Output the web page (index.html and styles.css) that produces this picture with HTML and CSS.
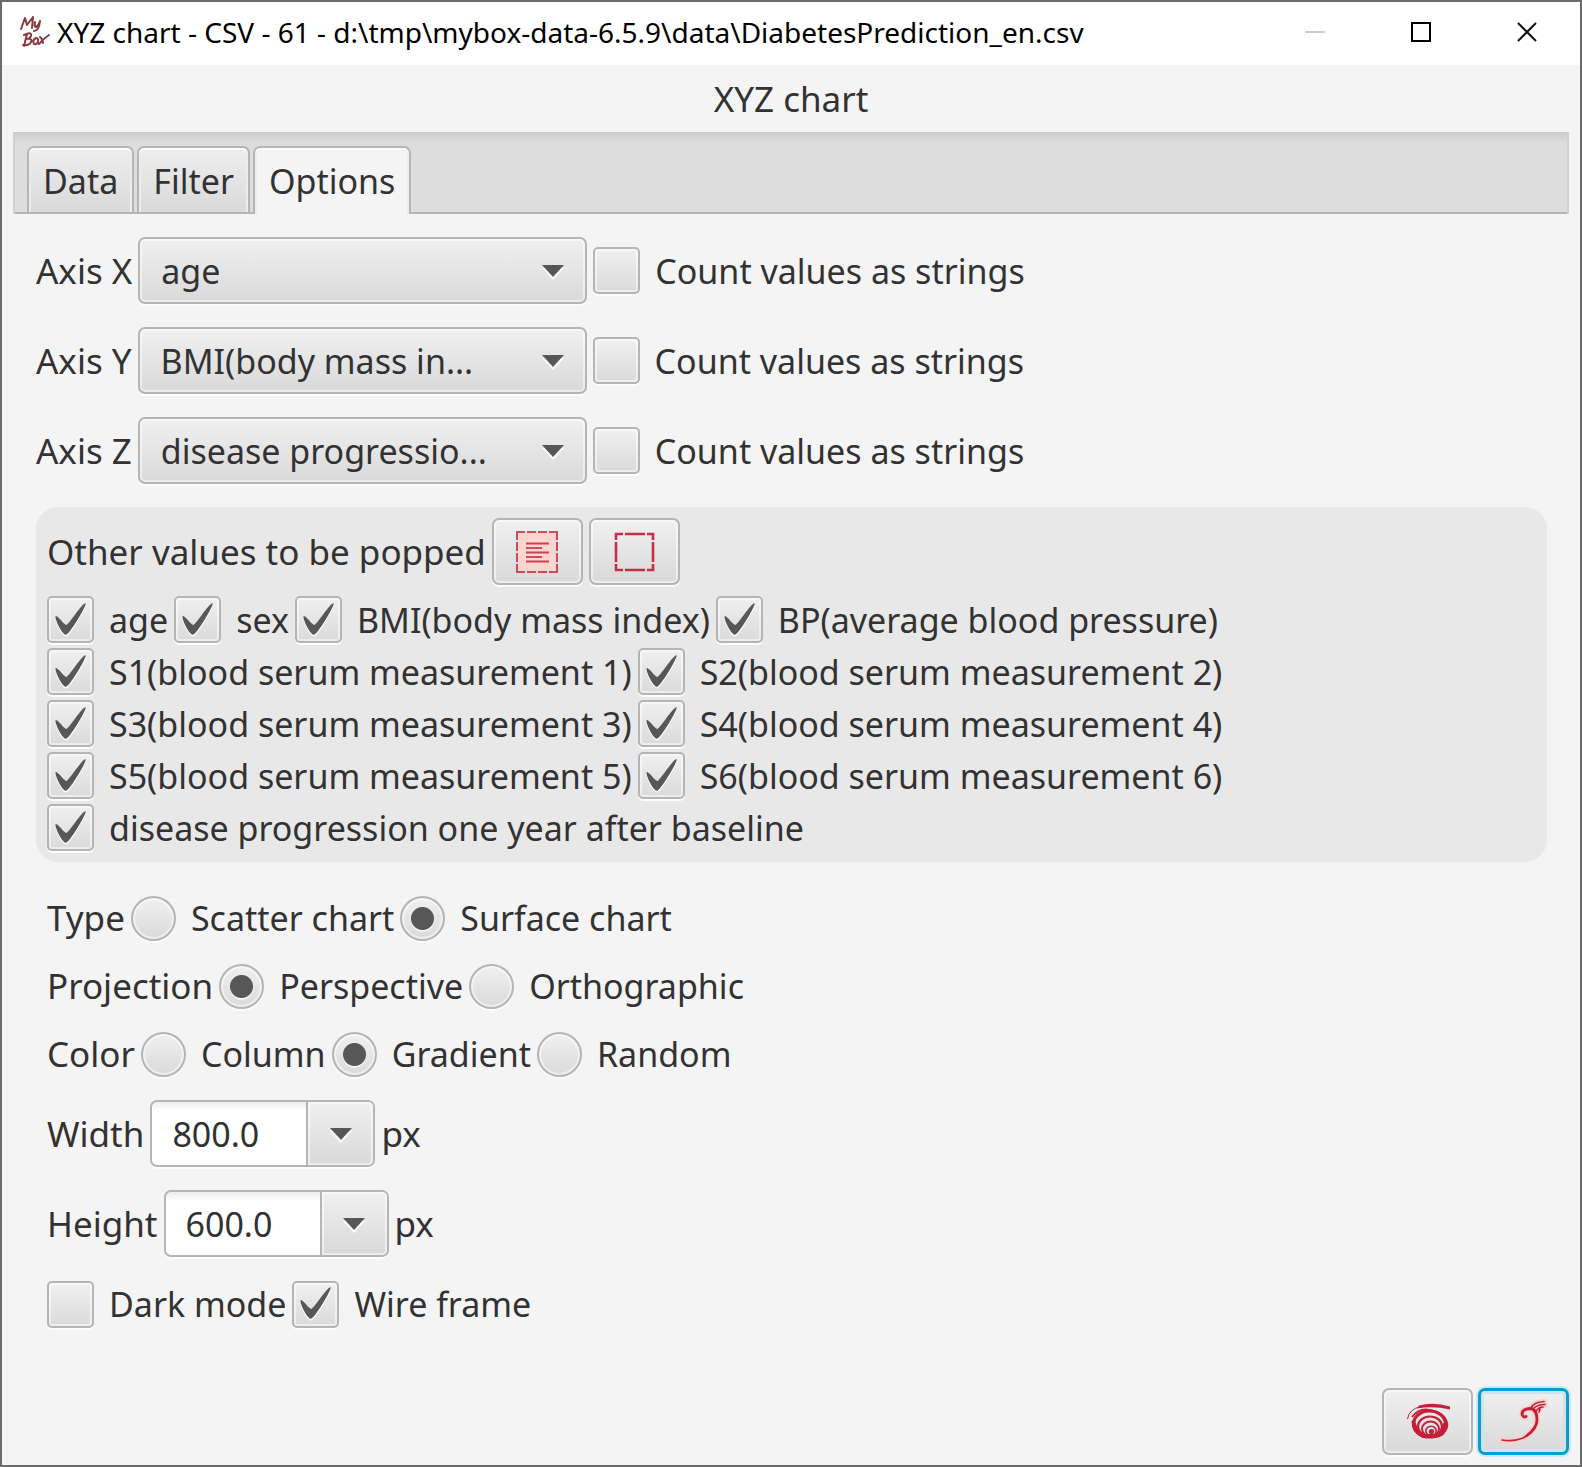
FILE: index.html
```html
<!DOCTYPE html>
<html lang="en">
<head>
<meta charset="utf-8">
<title>XYZ chart</title>
<link rel="stylesheet" href="styles.css">
</head>
<body>
<div class="window">
  <header class="titlebar">
    <svg class="logo" viewBox="0 0 30 32" aria-hidden="true"><g fill="none" stroke="#8a3a3c" stroke-width="2" stroke-linecap="round" stroke-linejoin="round"><path d="M1 13L5 2L7 9L13 1L12 12M15 6Q14 11 16 11Q18 10 20 5M20 5Q19 15 14 15"/><path d="M7 18L4 30M4 19Q12 15 11 20Q10 23 6 23Q13 22 11 26Q9 30 3 29M16 22Q12 24 14 28Q18 29 18 24Q18 22 16 22M20 21Q22 22 23 27M29 19Q24 22 19 28"/></g></svg>
    <span class="caption">XYZ chart - CSV - 61 - d:\tmp\mybox-data-6.5.9\data\DiabetesPrediction_en.csv</span>
    <div class="window-controls">
      <button type="button" aria-label="Minimize" disabled><svg viewBox="0 0 20 20"><path d="M0 10H20" stroke="#ccc" stroke-width="2"/></svg></button>
      <button type="button" aria-label="Maximize"><svg viewBox="0 0 20 20"><path d="M1 1H19V19H1Z" fill="none" stroke="#000" stroke-width="2"/></svg></button>
      <button type="button" aria-label="Close"><svg viewBox="0 0 20 20"><path d="M1 1L19 19M19 1L1 19" stroke="#111" stroke-width="2"/></svg></button>
    </div>
  </header>

  <main class="content">
    <h1 class="heading">XYZ chart</h1>
    <div class="tabs" role="tablist">
      <button type="button" class="tab" role="tab">Data</button>
      <button type="button" class="tab" role="tab">Filter</button>
      <button type="button" class="tab selected" role="tab" aria-selected="true">Options</button>
    </div>

    <form class="options">
      <div class="axes">
        <div class="row">
          <label for="axis-x">Axis X</label>
          <select id="axis-x" class="combo"><option>age</option></select>
          <label class="choice"><input type="checkbox">Count values as strings</label>
        </div>
        <div class="row">
          <label for="axis-y">Axis Y</label>
          <select id="axis-y" class="combo"><option>BMI(body mass in...</option></select>
          <label class="choice"><input type="checkbox">Count values as strings</label>
        </div>
        <div class="row">
          <label for="axis-z">Axis Z</label>
          <select id="axis-z" class="combo"><option>disease progressio...</option></select>
          <label class="choice"><input type="checkbox">Count values as strings</label>
        </div>
      </div>

      <section class="panel">
        <div class="row">
          <span>Other values to be popped</span>
          <button type="button" class="push" aria-label="Select all"><svg viewBox="0 0 42 42"><path d="M1 1H41V41H1Z" fill="#fbd5d0"/><path d="M1 9V1H9M11 1H20M22 1H31M33 1H41V9M41 11V20M41 22V31M41 33V41H33M31 41H22M20 41H11M9 41H1V33M1 31V22M1 20V11" fill="none" stroke="#d04a5c" stroke-width="2"/><path d="M10 12.500H33M10 21.500H33M10 30.500H33" stroke="#cf4055" stroke-width="2"/><path d="M10 17H26M10 26H26" stroke="#c41f38" stroke-width="1.300"/></svg></button>
          <button type="button" class="push" aria-label="Select none"><svg viewBox="0 0 42 42"><path d="M3 9V3H10M12 3H32M34 3H40V9M40 11V31M40 33V39H34M32 39H12M10 39H3V33M3 31V11" fill="none" stroke="#c72f45" stroke-width="2.600"/></svg></button>
        </div>
        <div class="values">
          <div class="row">
            <label class="choice"><input type="checkbox" checked>age</label>
            <label class="choice"><input type="checkbox" checked>sex</label>
            <label class="choice"><input type="checkbox" checked>BMI(body mass index)</label>
            <label class="choice"><input type="checkbox" checked>BP(average blood pressure)</label>
          </div>
          <div class="row">
            <label class="choice"><input type="checkbox" checked>S1(blood serum measurement 1)</label>
            <label class="choice"><input type="checkbox" checked>S2(blood serum measurement 2)</label>
          </div>
          <div class="row">
            <label class="choice"><input type="checkbox" checked>S3(blood serum measurement 3)</label>
            <label class="choice"><input type="checkbox" checked>S4(blood serum measurement 4)</label>
          </div>
          <div class="row">
            <label class="choice"><input type="checkbox" checked>S5(blood serum measurement 5)</label>
            <label class="choice"><input type="checkbox" checked>S6(blood serum measurement 6)</label>
          </div>
          <div class="row">
            <label class="choice"><input type="checkbox" checked>disease progression one year after baseline</label>
          </div>
        </div>
      </section>

      <div class="settings">
        <div class="row">
          <span>Type</span>
          <label class="choice"><input type="radio" name="type">Scatter chart</label>
          <label class="choice"><input type="radio" name="type" checked>Surface chart</label>
        </div>
        <div class="row">
          <span>Projection</span>
          <label class="choice"><input type="radio" name="projection" checked>Perspective</label>
          <label class="choice"><input type="radio" name="projection">Orthographic</label>
        </div>
        <div class="row">
          <span>Color</span>
          <label class="choice"><input type="radio" name="color">Column</label>
          <label class="choice"><input type="radio" name="color" checked>Gradient</label>
          <label class="choice"><input type="radio" name="color">Random</label>
        </div>
      </div>

      <div class="sizes">
        <div class="row">
          <label for="width">Width</label>
          <div class="editable"><input id="width" type="text" value="800.0"><button type="button" aria-label="Width choices"></button></div>
          <span>px</span>
        </div>
        <div class="row">
          <label for="height">Height</label>
          <div class="editable"><input id="height" type="text" value="600.0"><button type="button" aria-label="Height choices"></button></div>
          <span>px</span>
        </div>
        <div class="row">
          <label class="choice"><input type="checkbox">Dark mode</label>
          <label class="choice"><input type="checkbox" checked>Wire frame</label>
        </div>
      </div>
    </form>

    <footer class="actions">
      <button type="button" class="push" aria-label="Cancel"><svg viewBox="0 0 42 42"><g fill="none" stroke="#c41f38"><path d="M0.500 18Q2 8 14 5.500Q26 2 42.500 7"/><path d="M5 16Q14 4 29 11Q41 16 40 25Q38 35 28 36H16Q5 30 5.500 20" stroke-width="2"/><ellipse cx="22.500" cy="23" rx="16" ry="13" stroke-width="3.200"/><ellipse cx="23" cy="25.500" rx="12" ry="10" stroke-width="2.200"/><ellipse cx="23.500" cy="28" rx="8.500" ry="7.500" stroke-width="2"/><ellipse cx="24" cy="30" rx="5.200" ry="4.800" stroke-width="1.600"/></g><g fill="#c41f38"><path d="M12 4.500Q26 0.500 43 5.500V8.500Q26 4.500 10 7.500Z"/><path d="M5 20Q6 31 16 36.500H30Q40 33 41.500 24L36 22Q36 31 28 33H18Q9 29 8 18Z"/><circle cx="24.500" cy="30.500" r="2.600"/></g></svg></button>
      <button type="button" class="push focused" aria-label="OK"><svg viewBox="0 0 42 42"><g id="plume" fill="none" stroke="#fbd0cc" stroke-width="6" stroke-linecap="round" stroke-linejoin="round"><path d="M-1 39Q10 41 20 37Q34 29 34 19Q34 8 27 7.500Q19 8 19 13Q20 17 23 15.500M28 7Q31 1 41 1M30 8Q34 4 42 4M33 10Q36 6 38 7"/></g><g fill="none" stroke="#c41f38" stroke-linecap="round" stroke-linejoin="round"><path d="M-1 39Q10 41 20 37Q30 32 33 23" stroke-width="1.700"/><path d="M24 34.500Q34 27 34 19Q34 8 27 7.500Q19 8 19 13Q20 17 23 15.500" stroke-width="2.800"/><path d="M28 7Q31 1 41 0.500M30 8Q34 3.500 42 3.500M33 10Q36 6 40 6M36 11L37 8" stroke-width="1.700"/></g></svg></button>
    </footer>
  </main>
</div>
</body>
</html>
```
FILE: styles.css
```css
* {
  box-sizing: border-box;
}

body {
  margin: 0;
  color: #323232;
  font-family: "Noto Sans", "Open Sans", sans-serif;
  font-size: 35px;
  line-height: 48px;
}

button,
input,
select {
  margin: 0;
  color: inherit;
  font: inherit;
}

.window {
  display: flex;
  flex-direction: column;
  min-height: 100vh;
  border: 2px solid #6b6b6b;
  background: #f4f4f4;
}

.titlebar {
  display: flex;
  align-items: center;
  height: 63px;
  padding: 0 0 3px 18px;
  background: #fff;
  color: #000;
  font-size: 28px;
}

.logo {
  width: 30px;
  height: 32px;
  margin-right: 7px;
}

.caption {
  flex: 1;
  white-space: nowrap;
}

.window-controls {
  display: flex;
}

.window-controls button {
  display: grid;
  place-items: center;
  width: 106px;
  height: 60px;
  padding: 0;
  border: 0;
  background: none;
}

.window-controls svg {
  width: 20px;
  height: 20px;
}

.content {
  display: flex;
  flex: 1;
  flex-direction: column;
  padding: 10px 11px;
}

.heading {
  margin: 0 0 9px;
  font-size: 35px;
  font-weight: 400;
  text-align: center;
}

.tabs {
  display: flex;
  gap: 3px;
  height: 82px;
  padding: 14px 14px 0;
  background: linear-gradient(#b5b5b5, #b5b5b5) bottom / 100% 2px no-repeat, linear-gradient(#cacaca, #ddd 10px);
  box-shadow: inset 2px 0 #d0d0d0, inset -2px 0 #d0d0d0;
  font-size: 34px;
}

.tab {
  padding: 2px 14px 0;
  border: 2px solid #b5b5b5;
  border-radius: 7px 7px 0 0;
  background: linear-gradient(#efefef, #d9d9d9);
  box-shadow: inset 0 2px #fcfcfc, inset 2px 0 #ececec, inset -2px 0 #ececec;
}

.tab.selected {
  padding-top: 0;
  border-bottom: 0;
  background: #f4f4f4;
}

.options {
  padding: 23px 22px 0 23px;
}

.row {
  display: flex;
  align-items: center;
  gap: 6px;
  white-space: nowrap;
}

.axes {
  display: grid;
  gap: 23px;
}

.combo,
.push {
  height: 67px;
  border: 2px solid #b5b5b5;
  border-radius: 7px;
  background: linear-gradient(#f0f0f0, #d9d9d9);
  box-shadow: inset 0 0 0 2px #ffffff80, 0 2px #fcfcfc;
}

.combo {
  width: 449px;
  padding: 0 60px 0 21px;
  appearance: none;
  background:
    url("data:image/svg+xml,%3Csvg xmlns='http://www.w3.org/2000/svg' viewBox='0 0 24 15'%3E%3Cpath d='M1 3H23L12 15Z' fill='white'/%3E%3Cpath d='M1 0H23L12 12Z' fill='%23575757'/%3E%3C/svg%3E") right 20px top 26px / 24px 15px no-repeat,
    linear-gradient(#f0f0f0, #d9d9d9);
  font-size: 34px;
}

.choice {
  display: flex;
  align-items: center;
  gap: 15px;
  font-size: 34px;
}

input[type="checkbox"],
input[type="radio"] {
  flex: none;
  width: 47px;
  height: 47px;
  border: 2px solid #b5b5b5;
  border-radius: 5px;
  appearance: none;
  background: linear-gradient(#f0f0f0, #dadada);
  box-shadow: inset 0 0 0 2px #ffffff80, 0 2px #fcfcfc;
}

input[type="checkbox"]:checked {
  background:
    url("data:image/svg+xml,%3Csvg xmlns='http://www.w3.org/2000/svg' viewBox='-0.6 -1.1 16.8 18.5'%3E%3Cpath id='a' transform='translate(0 1)' fill='white' d='M-0.25,6.083c0.843-0.758,4.583,4.833,5.75,4.833S14.5-1.5,15.917-0.917c1.292,0.532-8.75,17.083-10.5,17.083C3,16.167-1.083,6.833-0.25,6.083z'/%3E%3Cpath fill='%23575757' d='M-0.25,6.083c0.843-0.758,4.583,4.833,5.75,4.833S14.5-1.5,15.917-0.917c1.292,0.532-8.75,17.083-10.5,17.083C3,16.167-1.083,6.833-0.25,6.083z'/%3E%3C/svg%3E") center / 31px 34px no-repeat,
    linear-gradient(#f0f0f0, #dadada);
}

input[type="radio"] {
  width: 45px;
  height: 45px;
  border-radius: 50%;
}

input[type="radio"]:checked {
  background:
    radial-gradient(circle, #575757 11px, transparent 12px),
    radial-gradient(circle at 50% 54%, #fafafa 11px, transparent 12px),
    linear-gradient(#f0f0f0, #dadada);
}

.panel {
  display: grid;
  gap: 11px;
  margin-top: 23px;
  padding: 11px;
  border-radius: 22px;
  background: #e8e8e8;
}

.values {
  display: grid;
  gap: 5px;
}

.values .row {
  height: 47px;
}

.push {
  display: grid;
  place-items: center;
  width: 91px;
  padding: 0;
}

.push svg {
  width: 42px;
  height: 42px;
  overflow: visible;
}

.push.focused {
  border: 3px solid #039ed3;
  box-shadow: inset 0 0 0 3px #d0e3ea, 0 0 0 2px #cfe7f0;
}

.settings {
  display: grid;
  gap: 20px;
  margin-top: 32px;
  padding-left: 11px;
}

.sizes {
  display: grid;
  gap: 23px;
  margin-top: 22px;
  padding-left: 11px;
}

.editable {
  display: flex;
  width: 225px;
  height: 67px;
  border: 2px solid #b5b5b5;
  border-radius: 7px;
  background: linear-gradient(#ededed, #fff 9px);
  box-shadow: 0 2px #fcfcfc;
}

.editable input {
  flex: 1;
  min-width: 0;
  padding: 0 0 0 20px;
  border: 0;
  background: none;
  font-size: 34px;
}

.editable button {
  width: 67px;
  border: 0;
  border-left: 2px solid #b5b5b5;
  border-radius: 0 5px 5px 0;
  background:
    url("data:image/svg+xml,%3Csvg xmlns='http://www.w3.org/2000/svg' viewBox='0 0 24 15'%3E%3Cpath d='M1 3H23L12 15Z' fill='white'/%3E%3Cpath d='M1 0H23L12 12Z' fill='%23575757'/%3E%3C/svg%3E") center top 26px / 24px 15px no-repeat,
    linear-gradient(#f0f0f0, #d9d9d9);
  box-shadow: inset 0 0 0 2px #ffffff80;
}

.actions {
  display: flex;
  justify-content: flex-end;
  gap: 5px;
  margin-top: auto;
}
```
